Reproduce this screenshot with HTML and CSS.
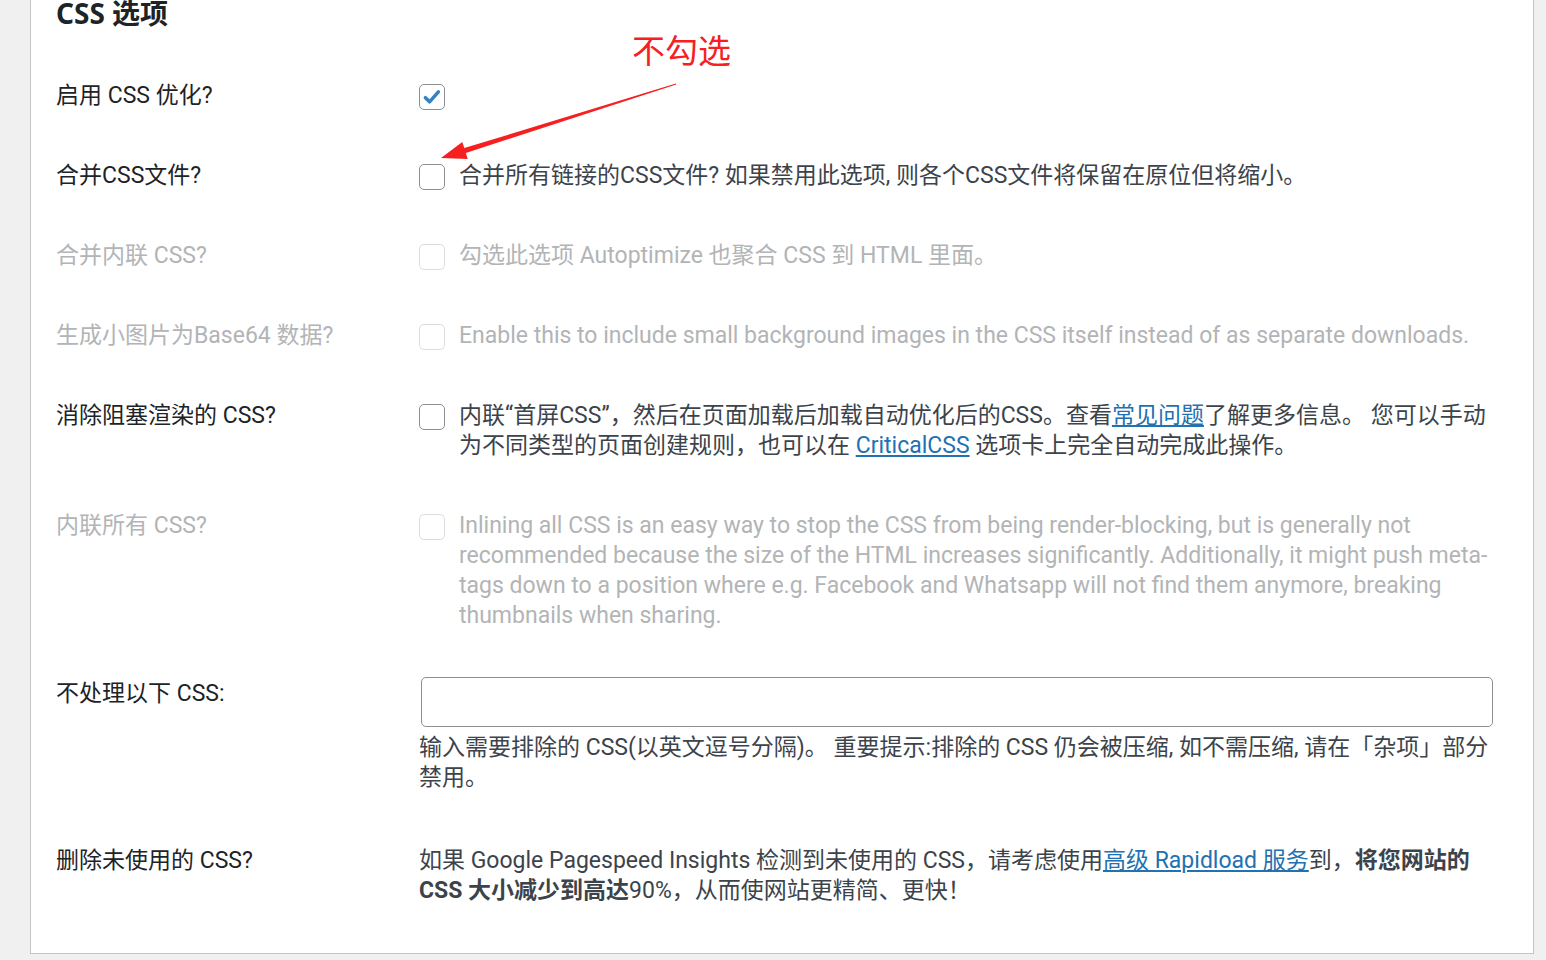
FILE: index.html
```html
<!DOCTYPE html>
<html lang="zh-CN">
<head>
    <meta charset="UTF-8">
    <meta name="viewport" content="width=device-width, initial-scale=1.0">
    <title>CSS 选项</title>
    <link rel="stylesheet" href="styles.css">
</head>
<body>
    <div class="panel">
        <h2 class="panel-title">CSS 选项</h2>

        <table class="form-table">
            <tr>
                <th>启用 CSS 优化?</th>
                <td>
                    <label class="check-row">
                        <span class="box checked">
                            <svg viewBox="0 0 20 20" width="22" height="22"><path d="M4 10.6l3.8 3.8 8-9" fill="none" stroke="#3582c4" stroke-width="3.2" stroke-linecap="round" stroke-linejoin="round"/></svg>
                        </span>
                    </label>
                </td>
            </tr>
            <tr>
                <th>合并CSS文件?</th>
                <td>
                    <label class="check-row">
                        <span class="box"></span>
                        <span class="check-text">合并所有链接的CSS文件? 如果禁用此选项, 则各个CSS文件将保留在原位但将缩小。</span>
                    </label>
                </td>
            </tr>
            <tr class="disabled">
                <th>合并内联 CSS?</th>
                <td>
                    <label class="check-row">
                        <span class="box"></span>
                        <span class="check-text">勾选此选项 Autoptimize 也聚合 CSS 到 HTML 里面。</span>
                    </label>
                </td>
            </tr>
            <tr class="disabled">
                <th>生成小图片为Base64 数据?</th>
                <td>
                    <label class="check-row">
                        <span class="box"></span>
                        <span class="check-text">Enable this to include small background images in the CSS itself instead of as separate downloads.</span>
                    </label>
                </td>
            </tr>
            <tr>
                <th>消除阻塞渲染的 CSS?</th>
                <td>
                    <label class="check-row">
                        <span class="box"></span>
                        <span class="check-text">内联“首屏CSS”，然后在页面加载后加载自动优化后的CSS。查看<a href="#">常见问题</a>了解更多信息。 您可以手动为不同类型的页面创建规则，也可以在 <a href="#">CriticalCSS</a> 选项卡上完全自动完成此操作。</span>
                    </label>
                </td>
            </tr>
            <tr class="disabled row-inline">
                <th>内联所有 CSS?</th>
                <td>
                    <label class="check-row">
                        <span class="box"></span>
                        <span class="check-text">Inlining all CSS is an easy way to stop the CSS from being render-blocking, but is generally not recommended because the size of the HTML increases significantly. Additionally, it might push meta-tags down to a position where e.g. Facebook and Whatsapp will not find them anymore, breaking thumbnails when sharing.</span>
                    </label>
                </td>
            </tr>
            <tr class="row-exclude">
                <th>不处理以下 CSS:</th>
                <td>
                    <textarea class="exclude-input"></textarea>
                    <p class="description">输入需要排除的 CSS(以英文逗号分隔)。 重要提示:排除的 CSS 仍会被压缩, 如不需压缩, 请在「杂项」部分禁用。</p>
                </td>
            </tr>
            <tr>
                <th>删除未使用的 CSS?</th>
                <td>
                    <p class="plain-text">如果 Google Pagespeed Insights 检测到未使用的 CSS，请考虑使用<a href="#">高级 Rapidload 服务</a>到，<strong>将您网站的 CSS 大小减少到高达</strong>90%，从而使网站更精简、更快！</p>
                </td>
            </tr>
        </table>
    </div>

    <!-- annotation drawn over the screenshot -->
    <div class="note">不勾选</div>
    <svg class="note-arrow" width="1546" height="960" viewBox="0 0 1546 960">
        <polygon points="441,158 462.3,141.9 464.3,148.1 675.9,83.5 676.2,84.5 465.8,152.9 467.7,159.1" fill="#f5201f"/>
    </svg>
</body>
</html>
```

FILE: styles.css
```css
body {
    margin: 0;
    padding: 0;
    background-color: #f0f0f1;
    font-family: Roboto, 'Noto Sans CJK SC', sans-serif;
    color: #3c434a;
    height: 960px;
    overflow: hidden;
}

.panel {
    margin-left: 30px;
    width: 1477px;
    padding: 0 0 22px 25px;
    background-color: #fff;
    border: 1px solid #c3c4c7;
    border-top: none;
}

.panel-title {
    margin: -2px 0 28px;
    font-family: 'Noto Sans', 'Noto Sans CJK SC', sans-serif;
    font-size: 28px;
    line-height: 30px;
    font-weight: bold;
    color: #1d2327;
}

.form-table {
    border-collapse: collapse;
    width: 1437px;
}

.form-table th {
    width: 363px;
    padding: 25px 0;
    text-align: left;
    vertical-align: top;
    font-weight: normal;
    font-size: 23px;
    line-height: 30px;
    color: #1d2327;
}

.form-table td {
    padding: 25px 0;
    vertical-align: top;
    font-size: 23px;
    line-height: 30px;
    color: #3c434a;
}

.check-row {
    display: flex;
    align-items: flex-start;
    gap: 14px;
    min-height: 30px;
}

.box {
    flex: none;
    width: 24px;
    height: 24px;
    margin-top: 3px;
    border: 1px solid #8c8f94;
    border-radius: 5px;
    background: #fff;
    display: flex;
    align-items: center;
    justify-content: center;
}

.box svg {
    display: block;
}

.disabled th,
.disabled td {
    color: #b2b4b6;
}

.disabled .box {
    border-color: #dcdcde;
}

.row-inline td {
    padding-bottom: 23px;
}

a {
    color: #2271b1;
    text-decoration: underline;
}

.row-exclude td {
    padding-bottom: 28px;
}

.exclude-input {
    display: block;
    box-sizing: border-box;
    width: 1072px;
    height: 50px;
    margin: -2px 0 6px 2px;
    border: 1px solid #8c8f94;
    border-radius: 5px;
    resize: none;
}

.description,
.plain-text {
    margin: 0;
}

.plain-text strong {
    font-weight: bold;
    color: #3c434a;
}

.note {
    position: absolute;
    left: 632px;
    top: 29px;
    font-size: 33px;
    line-height: 40px;
    color: #f5201f;
    font-family: 'Noto Sans CJK SC', sans-serif;
}

.note-arrow {
    position: absolute;
    left: 0;
    top: 0;
    pointer-events: none;
}
```
